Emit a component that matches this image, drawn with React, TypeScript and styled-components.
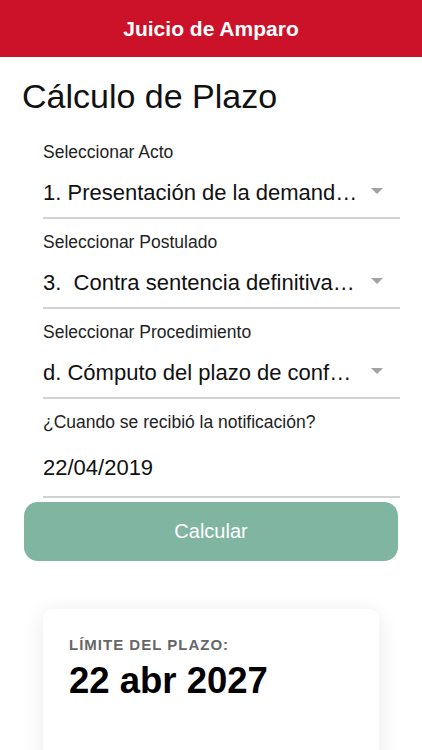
import React from "react";
import styled, { createGlobalStyle } from "styled-components";

const GlobalStyle = createGlobalStyle`
  html, body {
    margin: 0;
    padding: 0;
    background: #ffffff;
    font-family: "Liberation Sans", Arial, sans-serif;
    color: #111111;
  }
  * { box-sizing: border-box; }
`;

const Page = styled.div`
  width: 100%;
  height: 750px;
  background: #ffffff;
  overflow: hidden;
`;

const Header = styled.header`
  height: 57px;
  background: #cc1228;
  display: flex;
  align-items: center;
  justify-content: center;
`;

const HeaderTitle = styled.h1`
  margin: 0;
  font-size: 21px;
  font-weight: 700;
  color: #ffffff;
  line-height: 24px;
`;

const Title = styled.h2`
  margin: 20px 0 26px 22px;
  font-size: 34px;
  font-weight: 400;
  line-height: 39px;
  color: #111111;
`;

const Field = styled.div<{ $tall?: boolean }>`
  margin: 0 22px ${(p) => (p.$tall ? "4px" : "13px")} 43px;
  display: flex;
  flex-direction: column;
`;

const Label = styled.label`
  font-size: 17.5px;
  line-height: 20px;
  color: #222222;
`;

const Control = styled.div<{ $tall?: boolean }>`
  margin-top: ${(p) => (p.$tall ? "23px" : "18px")};
  padding-bottom: ${(p) => (p.$tall ? "15px" : "11px")};
  border-bottom: 2px solid #d2d2d2;
  display: flex;
  align-items: center;
`;

const Value = styled.div`
  flex: 1;
  min-width: 0;
  font-size: 22px;
  line-height: 26px;
  color: #111111;
  white-space: pre;
`;

const Arrow = styled.span`
  flex: none;
  width: 0;
  height: 0;
  margin: 0 17px 4px 11px;
  border-left: 6.5px solid transparent;
  border-right: 6.5px solid transparent;
  border-top: 6px solid #a2a2a2;
`;

const Button = styled.button`
  display: flex;
  align-items: center;
  justify-content: center;
  margin: 0 24px;
  width: calc(100% - 48px);
  height: 59px;
  border: none;
  border-radius: 14px;
  background: #80b5a2;
  color: #ffffff;
  font-family: "Liberation Sans", Arial, sans-serif;
  font-size: 20px;
  cursor: pointer;
`;

const Card = styled.section`
  margin: 48px 43px 0 43px;
  height: 180px;
  background: #ffffff;
  border-radius: 10px;
  box-shadow: 0 4px 22px rgba(0, 0, 0, 0.09);
  padding: 27px 26px;
`;

const CardLabel = styled.div`
  font-size: 15px;
  font-weight: 700;
  letter-spacing: 1px;
  line-height: 17px;
  color: #666666;
  text-transform: uppercase;
`;

const CardValue = styled.div`
  margin-top: 7px;
  font-size: 36.5px;
  font-weight: 700;
  line-height: 41px;
  color: #000000;
`;

type SelectProps = { label: string; value: string };

const SelectField: React.FC<SelectProps> = ({ label, value }) => (
  <Field>
    <Label>{label}</Label>
    <Control>
      <Value>{value}</Value>
      <Arrow />
    </Control>
  </Field>
);

export default function App() {
  return (
    <Page>
      <GlobalStyle />
      <Header>
        <HeaderTitle>Juicio de Amparo</HeaderTitle>
      </Header>
      <Title>Cálculo de Plazo</Title>
      <SelectField label="Seleccionar Acto" value="1. Presentación de la demand…" />
      <SelectField
        label="Seleccionar Postulado"
        value="3.  Contra sentencia definitiva…"
      />
      <SelectField
        label="Seleccionar Procedimiento"
        value="d. Cómputo del plazo de conf…"
      />
      <Field $tall>
        <Label>¿Cuando se recibió la notificación?</Label>
        <Control $tall>
          <Value>22/04/2019</Value>
        </Control>
      </Field>
      <Button>Calcular</Button>
      <Card>
        <CardLabel>Límite del plazo:</CardLabel>
        <CardValue>22 abr 2027</CardValue>
      </Card>
    </Page>
  );
}
